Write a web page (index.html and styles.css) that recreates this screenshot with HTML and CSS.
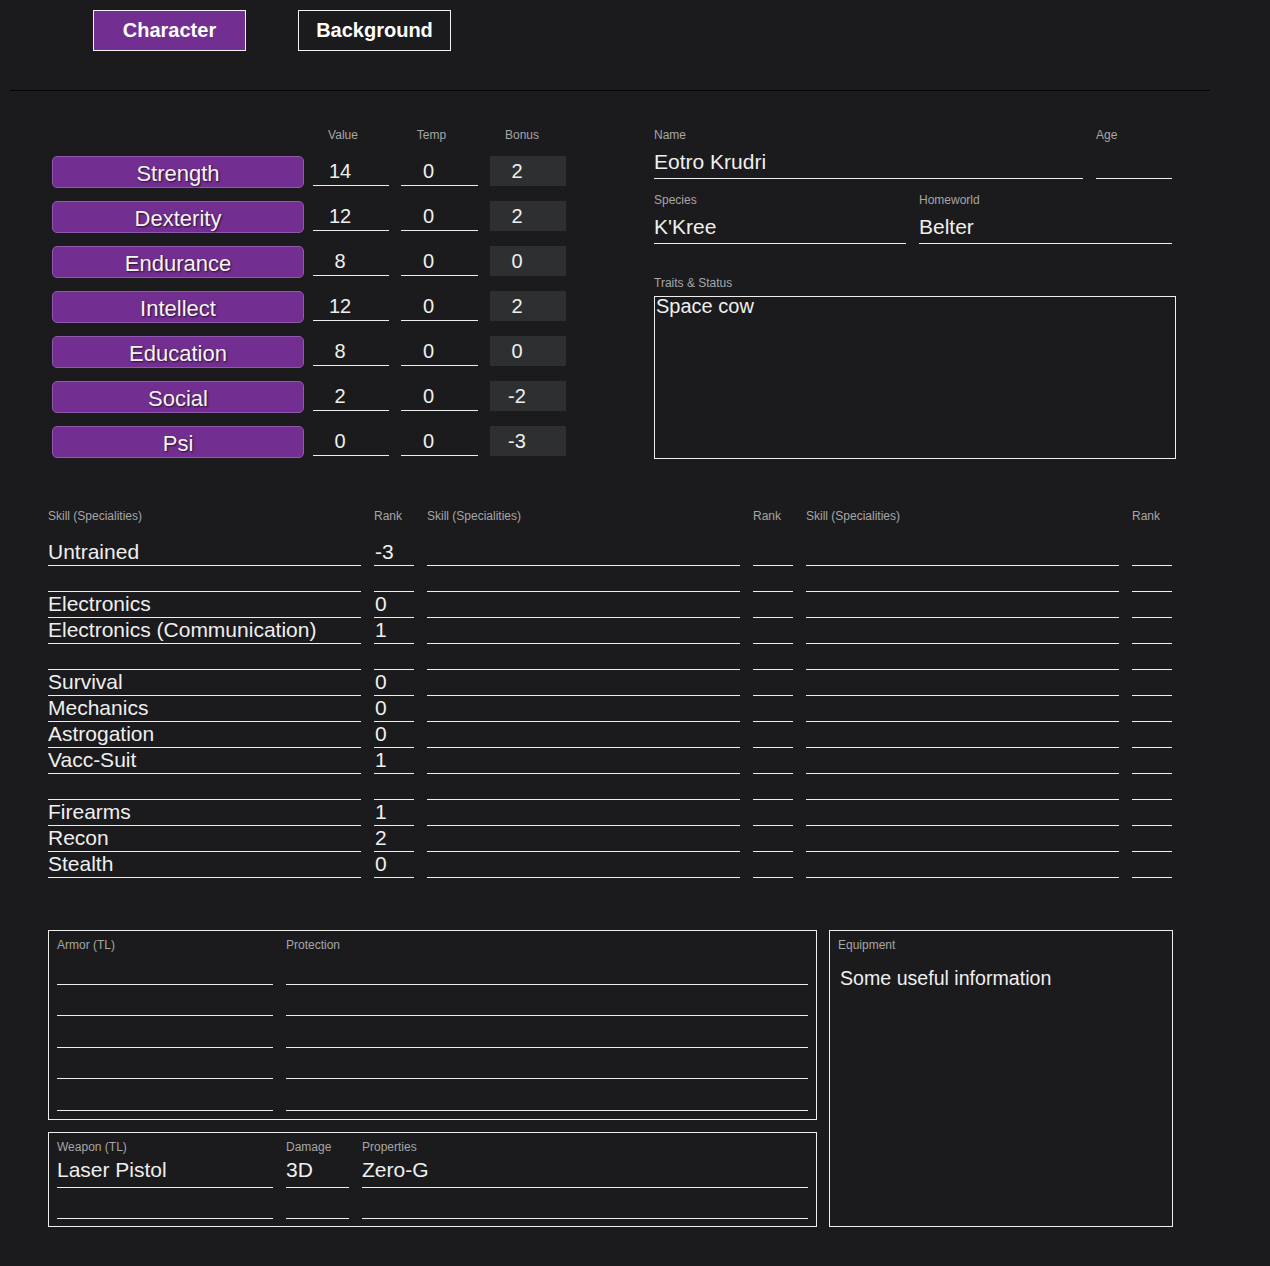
FILE: index.html
```html
<!DOCTYPE html>
<html lang="en">
<head>
<meta charset="utf-8">
<title>Character Sheet</title>
<link rel="stylesheet" href="styles.css">
</head>
<body>
<nav class="tabs">
  <div class="tab active">Character</div>
  <div class="tab">Background</div>
</nav>
<div class="divider"></div>

<section class="top">
  <div class="stats">
    <div class="stat-head">
      <div class="stat-spacer"></div>
      <div class="head-lbl val">Value</div>
      <div class="head-lbl temp">Temp</div>
      <div class="head-lbl bonus">Bonus</div>
    </div>
    <div class="stat-row"><div class="stat-btn">Strength</div><div class="stat-val">14</div><div class="stat-temp">0</div><div class="stat-bonus">2</div></div>
    <div class="stat-row"><div class="stat-btn">Dexterity</div><div class="stat-val">12</div><div class="stat-temp">0</div><div class="stat-bonus">2</div></div>
    <div class="stat-row"><div class="stat-btn">Endurance</div><div class="stat-val">8</div><div class="stat-temp">0</div><div class="stat-bonus">0</div></div>
    <div class="stat-row"><div class="stat-btn">Intellect</div><div class="stat-val">12</div><div class="stat-temp">0</div><div class="stat-bonus">2</div></div>
    <div class="stat-row"><div class="stat-btn">Education</div><div class="stat-val">8</div><div class="stat-temp">0</div><div class="stat-bonus">0</div></div>
    <div class="stat-row"><div class="stat-btn">Social</div><div class="stat-val">2</div><div class="stat-temp">0</div><div class="stat-bonus">-2</div></div>
    <div class="stat-row"><div class="stat-btn">Psi</div><div class="stat-val">0</div><div class="stat-temp">0</div><div class="stat-bonus">-3</div></div>
  </div>

  <div class="info">
    <div class="info-row">
      <div class="info-field name"><div class="lbl">Name</div><div class="field">Eotro Krudri</div></div>
      <div class="info-field age"><div class="lbl">Age</div><div class="field"></div></div>
    </div>
    <div class="info-row second">
      <div class="info-field species"><div class="lbl">Species</div><div class="field">K'Kree</div></div>
      <div class="info-field home"><div class="lbl">Homeworld</div><div class="field">Belter</div></div>
    </div>
    <div class="traits">
      <div class="lbl">Traits &amp; Status</div>
      <div class="textbox">Space cow</div>
    </div>
  </div>
</section>

<section class="skills">
  <div class="lbl sk-head">Skill (Specialities)</div><div class="lbl sk-head">Rank</div>
  <div class="lbl sk-head">Skill (Specialities)</div><div class="lbl sk-head">Rank</div>
  <div class="lbl sk-head">Skill (Specialities)</div><div class="lbl sk-head">Rank</div>

  <div class="cell">Untrained</div><div class="cell rank">-3</div><div class="cell"></div><div class="cell rank"></div><div class="cell"></div><div class="cell rank"></div>
  <div class="cell"></div><div class="cell rank"></div><div class="cell"></div><div class="cell rank"></div><div class="cell"></div><div class="cell rank"></div>
  <div class="cell">Electronics</div><div class="cell rank">0</div><div class="cell"></div><div class="cell rank"></div><div class="cell"></div><div class="cell rank"></div>
  <div class="cell">Electronics (Communication)</div><div class="cell rank">1</div><div class="cell"></div><div class="cell rank"></div><div class="cell"></div><div class="cell rank"></div>
  <div class="cell"></div><div class="cell rank"></div><div class="cell"></div><div class="cell rank"></div><div class="cell"></div><div class="cell rank"></div>
  <div class="cell">Survival</div><div class="cell rank">0</div><div class="cell"></div><div class="cell rank"></div><div class="cell"></div><div class="cell rank"></div>
  <div class="cell">Mechanics</div><div class="cell rank">0</div><div class="cell"></div><div class="cell rank"></div><div class="cell"></div><div class="cell rank"></div>
  <div class="cell">Astrogation</div><div class="cell rank">0</div><div class="cell"></div><div class="cell rank"></div><div class="cell"></div><div class="cell rank"></div>
  <div class="cell">Vacc-Suit</div><div class="cell rank">1</div><div class="cell"></div><div class="cell rank"></div><div class="cell"></div><div class="cell rank"></div>
  <div class="cell"></div><div class="cell rank"></div><div class="cell"></div><div class="cell rank"></div><div class="cell"></div><div class="cell rank"></div>
  <div class="cell">Firearms</div><div class="cell rank">1</div><div class="cell"></div><div class="cell rank"></div><div class="cell"></div><div class="cell rank"></div>
  <div class="cell">Recon</div><div class="cell rank">2</div><div class="cell"></div><div class="cell rank"></div><div class="cell"></div><div class="cell rank"></div>
  <div class="cell">Stealth</div><div class="cell rank">0</div><div class="cell"></div><div class="cell rank"></div><div class="cell"></div><div class="cell rank"></div>
</section>

<section class="gear">
  <div class="box armor">
    <div class="lbl">Armor (TL)</div><div class="lbl">Protection</div>
    <div class="gline"></div><div class="gline"></div>
    <div class="gline"></div><div class="gline"></div>
    <div class="gline"></div><div class="gline"></div>
    <div class="gline"></div><div class="gline"></div>
    <div class="gline"></div><div class="gline"></div>
  </div>
  <div class="box weapon">
    <div class="lbl">Weapon (TL)</div><div class="lbl">Damage</div><div class="lbl">Properties</div>
    <div class="gline first">Laser Pistol</div><div class="gline first">3D</div><div class="gline first">Zero-G</div>
    <div class="gline"></div><div class="gline"></div><div class="gline"></div>
  </div>
  <div class="box equip">
    <div class="lbl">Equipment</div>
    <div class="equip-text">Some useful information</div>
  </div>
</section>
</body>
</html>
```

FILE: styles.css
```css
* { box-sizing: border-box; }

body {
  margin: 0;
  background: #1b1b1d;
  color: #efefef;
  font-family: "Liberation Sans", Arial, sans-serif;
  height: 1266px;
}

.tabs {
  display: flex;
  gap: 52px;
  padding: 10px 0 0 93px;
}

.tab {
  width: 153px;
  height: 41px;
  border: 1px solid #f2f2f2;
  display: flex;
  align-items: center;
  justify-content: center;
  font-size: 20px;
  font-weight: bold;
  color: #fff;
}

.tab.active { background: #732e91; }

.divider {
  margin: 39px 0 0 10px;
  width: 1200px;
  border-top: 1px solid #050505;
}

.lbl {
  font-size: 12px;
  line-height: 14px;
  height: 14px;
  color: #a6a6a6;
  white-space: nowrap;
}

/* Top section */
.top {
  display: flex;
  padding-top: 37px;
}

.stats { margin-left: 52px; }

.stat-head {
  display: flex;
  height: 14px;
  margin-bottom: 14px;
}

.stat-spacer { width: 261px; }

.head-lbl {
  font-size: 12px;
  line-height: 14px;
  color: #a6a6a6;
  text-align: center;
  padding-right: 16px;
}
.head-lbl.val { width: 76px; }
.head-lbl.temp { width: 77px; margin-left: 12px; }
.head-lbl.bonus { width: 76px; margin-left: 12px; padding-right: 12px; }

.stat-row {
  display: flex;
  align-items: flex-start;
  height: 32px;
  margin-bottom: 13px;
}
.stat-row:last-child { margin-bottom: 0; }

.stat-btn {
  width: 252px;
  height: 32px;
  background: #732e91;
  border: 1px solid #9158ae;
  border-radius: 5px;
  font-size: 22px;
  line-height: 30px;
  padding-top: 2px;
  text-align: center;
  color: #f4f4f4;
  text-shadow: 1px 1px 2px rgba(0, 0, 0, 0.7);
}

.stat-val, .stat-temp, .stat-bonus {
  height: 30px;
  font-size: 20px;
  line-height: 30px;
  text-align: center;
  padding-right: 22px;
}

.stat-val {
  width: 76px;
  margin-left: 9px;
  border-bottom: 1px solid #eee;
}

.stat-temp {
  width: 77px;
  margin-left: 12px;
  border-bottom: 1px solid #eee;
}

.stat-bonus {
  width: 76px;
  margin-left: 12px;
  background: #2e2f31;
}

.info {
  margin-left: 88px;
  width: 522px;
}

.info-row {
  display: flex;
  gap: 13px;
}
.info-row.second { margin-top: 14px; }

.info-field.name { width: 429px; }
.info-field.age { width: 76px; }
.info-field.species { width: 252px; }
.info-field.home { width: 253px; }

.field {
  margin-top: 6px;
  height: 31px;
  border-bottom: 1px solid #eee;
  font-size: 21px;
  line-height: 28px;
  white-space: nowrap;
}

.traits { margin-top: 32px; }

.textbox {
  margin-top: 6px;
  width: 522px;
  height: 163px;
  border: 1px solid #eee;
  font-size: 20px;
  line-height: 19px;
  padding: 0 1px;
}

/* Skills */
.skills {
  display: grid;
  grid-template-columns: 313px 40px 313px 40px 313px 40px;
  column-gap: 13px;
  margin: 50px 0 0 48px;
}

.sk-head { height: 31px; }

.cell {
  height: 26px;
  border-bottom: 1px solid #eee;
  font-size: 21px;
  line-height: 24px;
  white-space: nowrap;
}
.cell.rank { padding-left: 1px; }

/* Gear */
.gear {
  display: grid;
  grid-template-columns: 769px 344px;
  grid-template-rows: auto auto;
  gap: 12px;
  margin: 52px 0 0 48px;
}

.box {
  border: 1px solid #eee;
  padding: 7px 8px 8px;
}

.armor {
  display: grid;
  grid-template-columns: 216px 1fr;
  grid-auto-rows: 31.5px;
  grid-template-rows: 15px;
  column-gap: 13px;
}

.weapon {
  display: grid;
  grid-template-columns: 216px 63px 1fr;
  grid-template-rows: 14px 34px 31px;
  column-gap: 13px;
  padding-bottom: 7px;
}

.gline {
  border-bottom: 1px solid #eee;
  font-size: 21px;
  line-height: 31px;
  white-space: nowrap;
}

.equip {
  grid-column: 2;
  grid-row: 1 / span 2;
}

.equip-text {
  margin-top: 14px;
  padding-left: 2px;
  font-size: 19.6px;
  line-height: 24px;
}
```
